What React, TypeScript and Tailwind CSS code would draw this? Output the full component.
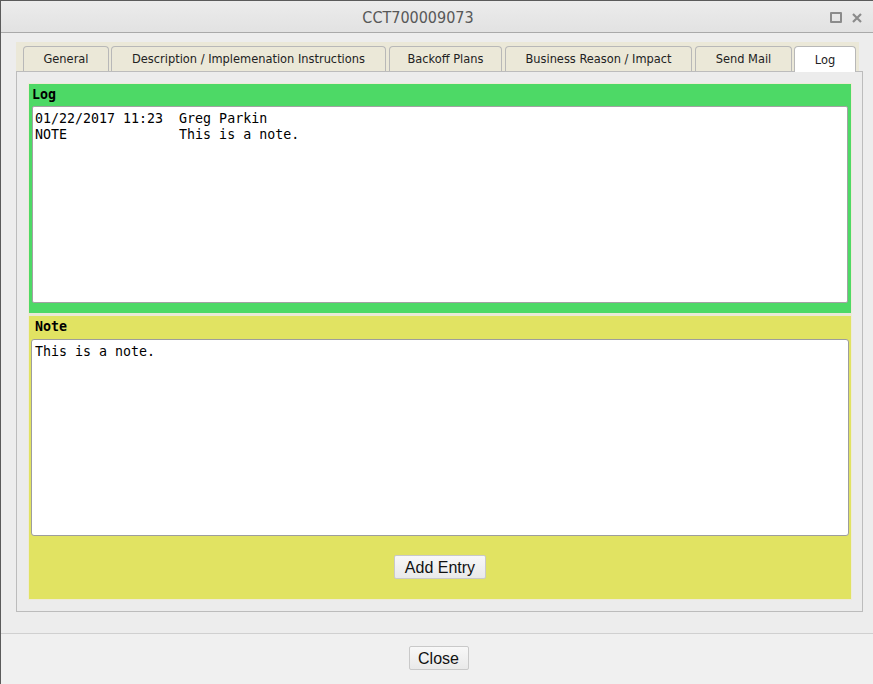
import React from "react";

const tabs = [
  { label: "General", cls: "w-[86px]" },
  { label: "Description / Implemenation Instructions", cls: "w-[275px] ml-[2px]" },
  { label: "Backoff Plans", cls: "w-[113px] ml-[3px]" },
  { label: "Business Reason / Impact", cls: "w-[187px] ml-[3px]" },
  { label: "Send Mail", cls: "w-[97px] ml-[3px]" },
];

const mono = "font-['DejaVu_Sans_Mono',monospace] text-[13.3px] leading-[16px] text-black";

export default function App() {
  return (
    <div className="w-[873px] h-[684px] flex flex-col bg-[#ededed] border-l border-t border-[#5b5b5b] overflow-hidden">
      {/* title bar */}
      <div className="relative h-[32px] shrink-0 flex items-center justify-center bg-gradient-to-b from-[#ececec] to-[#e2e2e2] border-b border-[#a9a9a9]">
        <span className="font-['DejaVu_Sans_Condensed','DejaVu_Sans',sans-serif] text-[16px] text-[#585858] mt-[2px] mr-[38px]">
          CCT700009073
        </span>
        <div className="absolute right-[11px] top-[11px] flex items-center gap-[10px]">
          <div className="w-[12px] h-[11px] border-2 border-[#8b8b8b] rounded-[1px]" />
          <svg width="10" height="10" viewBox="0 0 10 10">
            <path d="M1 1L9 9M9 1L1 9" stroke="#8b8b8b" strokeWidth="2.2" />
          </svg>
        </div>
      </div>

      {/* body */}
      <div className="flex-1 pl-[15px] pr-[10px] pt-[9px]">
        <div className="w-[847px] flex flex-col">
          {/* tab strip */}
          <div className="h-[29px] w-[843px] bg-[#ebe8d8] flex items-end pl-[7px] font-['DejaVu_Sans_Condensed','DejaVu_Sans',sans-serif] text-[12.7px] text-[#222]">
            {tabs.map((t) => (
              <div
                key={t.label}
                className={`${t.cls} h-[25px] flex items-center justify-center bg-[#ebe8d8] border border-b-0 border-[#b8b8b8] rounded-t-[4px]`}
              >
                {t.label}
              </div>
            ))}
            <div className="w-[62px] ml-[2px] h-[26px] -mb-[1px] relative z-10 flex items-center justify-center bg-white border border-b-0 border-[#b8b8b8] rounded-t-[4px]">
              Log
            </div>
          </div>

          {/* tab panel */}
          <div className="h-[541px] border border-[#bcbcbc] bg-[#ececec] pl-[11px] pr-[10px] pt-[11px]">
            <div className="border border-[#efebd6] flex flex-col">
              <div className="bg-[#4dd966] px-[2px] pb-[10px]">
                <div className={`${mono} font-bold h-[22px] flex items-center pl-[1px]`}>Log</div>
                <div className={`${mono} ml-[1px] mr-[1px] h-[197px] bg-white border border-[#a2a2a2] rounded-[2px] px-[2px] pt-[4px] whitespace-pre`}>
                  {"01/22/2017 11:23  Greg Parkin\nNOTE              This is a note."}
                </div>
              </div>
              <div className="h-[3px] bg-[#ebe8d6]" />
              <div className="bg-[#e1e362] px-[2px] pb-[20px] flex flex-col">
                <div className={`${mono} font-bold h-[23px] flex items-center pl-[4px] pb-[1px]`}>Note</div>
                <div className={`${mono} h-[197px] bg-white border border-[#9d9d9d] rounded-[3px] px-[3px] pt-[4px] whitespace-pre`}>
                  This is a note.
                </div>
                <div className="flex justify-center pt-[19px]">
                  <button className="w-[92px] h-[24px] bg-gradient-to-b from-[#f8f8f8] to-[#e9e9e9] border border-[#c9c9c9] rounded-[2px] font-['Liberation_Sans',Arial,sans-serif] text-[16px] text-[#111]">
                    Add Entry
                  </button>
                </div>
              </div>
            </div>
          </div>
        </div>
      </div>

      {/* footer */}
      <div className="h-[51px] shrink-0 border-t border-[#d0d0d0] bg-[#f0f0f0] flex justify-center pt-[12px] pl-[3px]">
        <button className="w-[60px] h-[24px] bg-gradient-to-b from-[#f8f8f8] to-[#e9e9e9] border border-[#c9c9c9] rounded-[2px] font-['Liberation_Sans',Arial,sans-serif] text-[16px] text-[#111]">
          Close
        </button>
      </div>
    </div>
  );
}
